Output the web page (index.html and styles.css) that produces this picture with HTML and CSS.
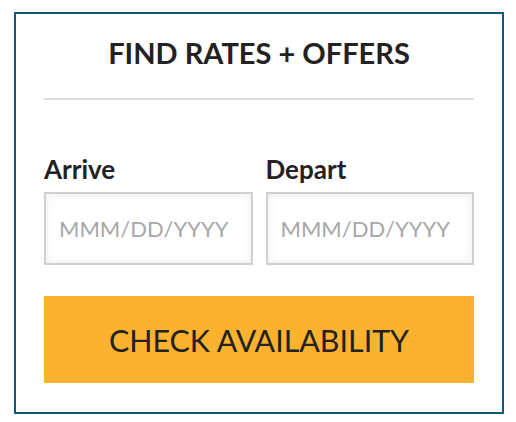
FILE: index.html
```html
<!DOCTYPE html>
<html>
<head>
<meta charset="utf-8">
<link rel="stylesheet" href="styles.css">
</head>
<body>
<div class="card">
  <h2 class="title">FIND RATES + OFFERS</h2>
  <hr class="divider">
  <div class="fields">
    <div class="field">
      <label class="label">Arrive</label>
      <input class="date" type="text" placeholder="MMM/DD/YYYY">
    </div>
    <div class="field">
      <label class="label">Depart</label>
      <input class="date" type="text" placeholder="MMM/DD/YYYY">
    </div>
  </div>
  <button class="check">CHECK AVAILABILITY</button>
</div>
</body>
</html>
```

FILE: styles.css
```css
* { box-sizing: border-box; }
html, body { margin: 0; padding: 0; background: #fff; }
body { font-family: Lato, "Open Sans", sans-serif; color: #222; }
.card {
  margin: 12px 0 0 14px;
  width: 490px;
  border: 2px solid #0f5b7e;
  padding: 22px 28px 29px;
}
.title {
  margin: 0;
  text-align: center;
  font-size: 29px;
  line-height: 34px;
  font-weight: 700;
  color: #222;
}
.divider {
  margin: 28px 0 0;
  border: 0;
  height: 2px;
  background: #dddddd;
}
.fields {
  display: grid;
  grid-template-columns: 1fr 1fr;
  column-gap: 13px;
  margin-top: 56px;
}
.field { display: flex; flex-direction: column; }
.label {
  font-size: 26px;
  line-height: 26px;
  font-weight: 700;
  color: #222;
  margin-bottom: 10px;
}
.date {
  height: 73px;
  width: 100%;
  border: 2px solid #d0d0d0;
  background: #fff;
  box-shadow: inset 0 0 10px rgba(0,0,0,0.08);
  padding: 0 0 0 13px;
  font-family: Lato, sans-serif;
  font-size: 22px;
  color: #333;
  outline: none;
}
.date::placeholder { color: #a8a8a8; }
.check {
  display: block;
  width: 100%;
  height: 87px;
  margin-top: 31px;
  border: 0;
  background: #fbb32f;
  font-family: Lato, sans-serif;
  font-size: 30.4px;
  font-weight: 400;
  color: #222;
  padding: 0;
}
```
